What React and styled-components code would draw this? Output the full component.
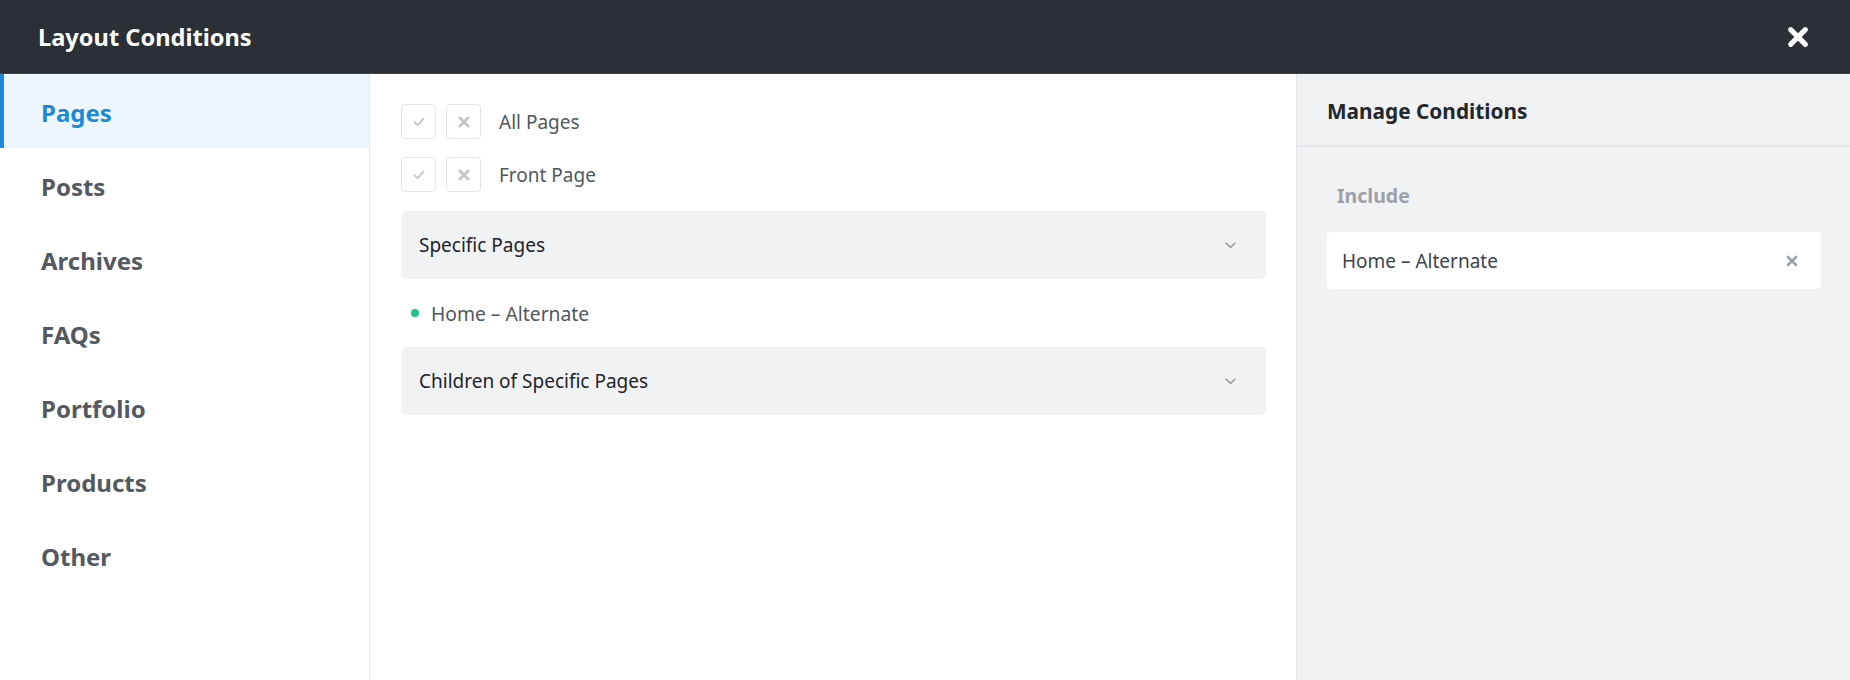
import React from 'react';
import styled, { createGlobalStyle } from 'styled-components';

const GlobalStyle = createGlobalStyle`
  html, body {
    margin: 0;
    padding: 0;
    background: #fff;
  }
  body {
    font-family: 'Noto Sans', 'Open Sans', sans-serif;
  }
  * {
    box-sizing: border-box;
  }
`;

const navItems = ['Pages', 'Posts', 'Archives', 'FAQs', 'Portfolio', 'Products', 'Other'];

const CheckIcon = () => (
  <svg width="12" height="10" viewBox="0 0 12 10">
    <path d="M1.5 5.2 L4.6 8.2 L10.5 1.8" fill="none" stroke="#c8cbcf" strokeWidth="2" strokeLinecap="round" strokeLinejoin="round" />
  </svg>
);

const CrossIcon = ({ size = 12, color = '#c3c6ca', weight = 3 }) => (
  <svg width={size} height={size} viewBox="0 0 12 12">
    <path d="M2 2 L10 10 M10 2 L2 10" fill="none" stroke={color} strokeWidth={weight} strokeLinecap="round" />
  </svg>
);

const Chevron = () => (
  <svg width="11" height="7" viewBox="0 0 11 7">
    <path d="M1 1 L5.5 5.5 L10 1" fill="none" stroke="#8f9297" strokeWidth="1.4" strokeLinecap="round" strokeLinejoin="round" />
  </svg>
);

const App = () => (
  <>
    <GlobalStyle />
    <Modal>
      <Header>
        <Title>Layout Conditions</Title>
        <CloseButton aria-label="Close">
          <CrossIcon size={22} color="#ffffff" weight={2.8} />
        </CloseButton>
      </Header>
      <Body>
        <Sidebar>
          {navItems.map((item, i) => (
            <NavItem key={item} active={i === 0}>
              {item}
            </NavItem>
          ))}
        </Sidebar>

        <Main>
          <CheckRow>
            <BoxButton><CheckIcon /></BoxButton>
            <BoxButton><CrossIcon /></BoxButton>
            <CheckLabel>All Pages</CheckLabel>
          </CheckRow>
          <CheckRow last>
            <BoxButton><CheckIcon /></BoxButton>
            <BoxButton><CrossIcon /></BoxButton>
            <CheckLabel>Front Page</CheckLabel>
          </CheckRow>

          <Accordion>
            <span>Specific Pages</span>
            <Chevron />
          </Accordion>
          <SelectedItem>
            <Dot />
            Home – Alternate
          </SelectedItem>
          <Accordion>
            <span>Children of Specific Pages</span>
            <Chevron />
          </Accordion>
        </Main>

        <Panel>
          <PanelHeader>Manage Conditions</PanelHeader>
          <PanelBody>
            <GroupLabel>Include</GroupLabel>
            <ConditionCard>
              <span>Home – Alternate</span>
              <RemoveButton aria-label="Remove">
                <CrossIcon size={12} color="#9ea3a8" weight={2.8} />
              </RemoveButton>
            </ConditionCard>
          </PanelBody>
        </Panel>
      </Body>
    </Modal>
  </>
);

export default App;

const Modal = styled.div`
  width: 1850px;
  height: 680px;
  display: flex;
  flex-direction: column;
  overflow: hidden;
`;

const Header = styled.header`
  height: 74px;
  flex-shrink: 0;
  background: #2b2f36;
  border-bottom: 1px solid #3c4047;
  display: flex;
  align-items: center;
  justify-content: space-between;
  padding: 0 41px 0 38px;
`;

const Title = styled.h1`
  margin: 0;
  color: #ffffff;
  font-size: 23.6px;
  font-weight: 700;
  line-height: 1;
  padding-top: 2px;
`;

const CloseButton = styled.button`
  border: none;
  background: none;
  padding: 0;
  display: flex;
  cursor: pointer;
`;

const Body = styled.div`
  flex: 1;
  display: grid;
  grid-template-columns: 370px 1fr 554px;
  min-height: 0;
`;

const Sidebar = styled.nav`
  border-right: 1px solid #e6e8eb;
  display: flex;
  flex-direction: column;
`;

const NavItem = styled.div`
  height: 74px;
  display: flex;
  align-items: center;
  padding-left: ${({ active }) => (active ? '37px' : '41px')};
  padding-top: 2px;
  border-left: ${({ active }) => (active ? '4px solid #1d8ad6' : 'none')};
  background: ${({ active }) => (active ? '#eef6fd' : 'transparent')};
  color: ${({ active }) => (active ? '#1d8ad6' : '#525960')};
  font-size: 24px;
  font-weight: 700;
  cursor: pointer;
`;

const Main = styled.main`
  padding: 30px 30px 0 31px;
  display: flex;
  flex-direction: column;
`;

const CheckRow = styled.div`
  display: flex;
  align-items: center;
  gap: 10px;
  height: 35px;
  margin-bottom: ${({ last }) => (last ? '19px' : '18px')};
`;

const BoxButton = styled.button`
  width: 35px;
  height: 35px;
  padding: 0;
  border: 1px solid #e3e5e8;
  border-radius: 4px;
  background: #ffffff;
  display: flex;
  align-items: center;
  justify-content: center;
  cursor: pointer;
`;

const CheckLabel = styled.span`
  margin-left: 8px;
  color: #50575f;
  font-size: 19px;
`;

const Accordion = styled.div`
  height: 68px;
  background: #f1f2f4;
  border-radius: 5px;
  display: flex;
  align-items: center;
  justify-content: space-between;
  padding: 0 30px 0 18px;
  color: #1f2328;
  font-size: 19px;
  cursor: pointer;
`;

const SelectedItem = styled.div`
  height: 68px;
  display: flex;
  align-items: center;
  gap: 12px;
  padding-left: 10px;
  color: #50575f;
  font-size: 19.3px;
`;

const Dot = styled.span`
  width: 8px;
  height: 8px;
  border-radius: 50%;
  background: #1ec28b;
`;

const Panel = styled.aside`
  background: #f1f2f4;
  border-left: 1px solid #e3e5e8;
  display: flex;
  flex-direction: column;
`;

const PanelHeader = styled.div`
  height: 73px;
  display: flex;
  align-items: center;
  padding-left: 30px;
  padding-top: 2px;
  border-bottom: 2px solid #e3e5e8;
  color: #23282d;
  font-size: 20.8px;
  font-weight: 700;
`;

const PanelBody = styled.div`
  padding: 33px 29px 0 30px;
`;

const GroupLabel = styled.div`
  padding-left: 10px;
  height: 30px;
  display: flex;
  align-items: center;
  color: #9da1a7;
  font-size: 19.5px;
  font-weight: 700;
  margin-bottom: 22px;
`;

const ConditionCard = styled.div`
  height: 57px;
  background: #ffffff;
  border-radius: 4px;
  display: flex;
  align-items: center;
  justify-content: space-between;
  padding: 0 23px 0 15px;
  color: #3c434a;
  font-size: 19px;
`;

const RemoveButton = styled.button`
  border: none;
  background: none;
  padding: 0;
  display: flex;
  cursor: pointer;
`;
